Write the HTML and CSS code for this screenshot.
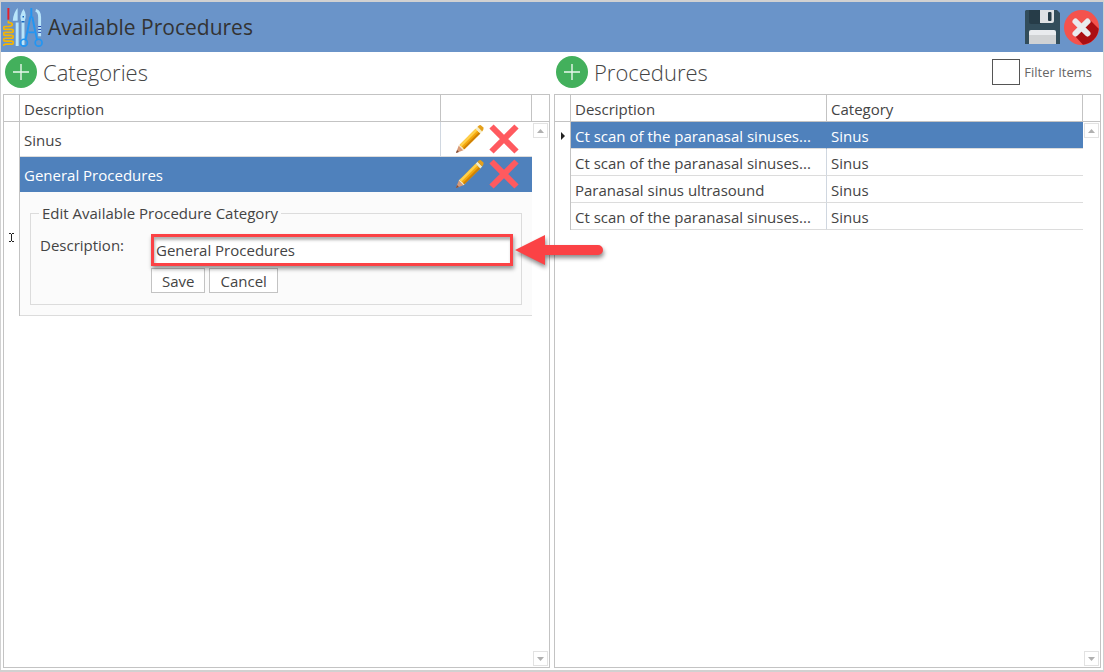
FILE: index.html
```html
<!DOCTYPE html>
<html lang="en">
<head>
    <meta charset="UTF-8">
    <title>Available Procedures</title>
    <link rel="stylesheet" href="styles.css">
</head>
<body>

<!-- Shared icons -->
<svg class="sprite" aria-hidden="true">
    <symbol id="icon-add" viewBox="0 0 32 32">
        <circle cx="16" cy="16" r="16" fill="#43b05c"/>
        <path d="M16 8v16M8 16h16" stroke="#e9f7ec" stroke-width="1.4"/>
    </symbol>
    <symbol id="icon-edit" viewBox="0 0 32 32">
        <path d="M1 31l3-8 5 5z" fill="#d99a76"/>
        <path d="M1 31l1.200-3.200 2 2z" fill="#7c4b3a"/>
        <path d="M4 23l2-2 5 5-2 2z" fill="#fbe9c0"/>
        <path d="M5 22L22 5l5 5-17 17z" fill="#f3a70c"/>
        <path d="M5 22L22 5l2 2L7 24z" fill="#ffd04a"/>
        <path d="M8.500 25.500l17-17 1.500 1.500-17 17z" fill="#cf8105"/>
        <path d="M22 5l2-2 5 5-2 2z" fill="#f5edc5"/>
        <path d="M24 3l1.500-1.500q1.500-1 3 .5l1.500 1.500q1 1.500 0 3L29 8z" fill="#e5a01a"/>
    </symbol>
    <symbol id="icon-delete" viewBox="0 0 30 30">
        <path d="M2.500 2.500l25 25M27.500 2.500l-25 25" stroke="#ff5a5f" stroke-width="6"/>
    </symbol>
</svg>

<div class="window">

    <header class="titlebar">
        <svg class="logo" viewBox="0 0 42 42" fill="none" aria-hidden="true">
            <path d="M5.500 1v12" stroke="#e3202b" stroke-width="2"/>
            <path d="M5.500 14v2q4 0 4 2t-4 2h-3q-2 0-2 1.500t2 1.500h6q2 0 2 1.500t-2 1.500h-6q-2 0-2 1.500t2 1.500h6q2 0 2 1.500t-2 1.500h-6q-2 0-2 1.500t2 1.500h6q2 0 2 1.500t-2 1.500h-5q-3 0-3 2" stroke="#f7b500" stroke-width="1.700"/>
            <path d="M15 1v13h-5q1-9 5-13zM13 16h3v24h-3z" fill="#b8e5fb"/>
            <path d="M21 2q4 6 1 13v24h-3V15q-3-6 2-13z" fill="#b8e5fb"/>
            <path d="M20 10h1.500M19 15h3" stroke="#1565c0" stroke-width="1.500"/>
            <path d="M29 1v10M28 10l-3 15-2 9M30 10l3 15 2 9M26 26h6" stroke="#2196f3" stroke-width="2"/>
            <circle cx="21.500" cy="36.500" r="3.500" stroke="#2196f3" stroke-width="1.700"/>
            <circle cx="36.500" cy="36.500" r="3.500" stroke="#2196f3" stroke-width="1.700"/>
            <path d="M33.500 3.500q4 1 4 7V30" stroke="#b8e5fb" stroke-width="3"/>
            <path d="M36 20h3M36 23h3M36 26h3" stroke="#1e3fae" stroke-width="1"/>
        </svg>
        <h1 class="window-title">Available Procedures</h1>
        <button class="icon-button" type="button" aria-label="Save">
            <svg viewBox="0 0 35 35" aria-hidden="true">
                <path d="M1 0h31l3 3v31H0V1z" fill="#324d5b"/>
                <path d="M4 0h12v14H6q-2 0-2-2z" fill="#263c48"/>
                <path d="M15 0h14v11q0 2-2 2H15z" fill="#dfe2e5"/>
                <rect x="23" y="2" width="3.500" height="9" rx="1" fill="#263c48"/>
                <path d="M4 34V22q0-2 2-2h23q2 0 2 2v12z" fill="#e9ebee"/>
                <path d="M4 25h27v9H4z" fill="#d0d2d4"/>
            </svg>
        </button>
        <button class="icon-button" type="button" aria-label="Close">
            <svg viewBox="0 0 35 35" aria-hidden="true">
                <circle cx="17.500" cy="17.500" r="17.500" fill="#f4524d"/>
                <path d="M25 9l9.700 9.700a17.500 17.500 0 0 1-15.700 16L10 25z" fill="#ab0e12"/>
                <path d="M11.500 11.500l12 12M23.500 11.500l-12 12" stroke="#e9ebee" stroke-width="6" stroke-linecap="round"/>
            </svg>
        </button>
    </header>

    <main class="panels">

        <section class="panel">
            <div class="panel-head">
                <button class="add-button" type="button" aria-label="Add category"><svg aria-hidden="true"><use href="#icon-add"/></svg></button>
                <h2 class="panel-title">Categories</h2>
            </div>
            <div class="grid">
                <div class="grid-body">
                    <table class="grid-table categories">
                        <colgroup><col class="col-mark"><col><col class="col-tools"></colgroup>
                        <thead>
                            <tr><th></th><th>Description</th><th></th></tr>
                        </thead>
                        <tbody>
                            <tr>
                                <td class="mark"></td>
                                <td>Sinus</td>
                                <td class="tools">
                                    <button class="tool" type="button" aria-label="Edit Sinus"><svg aria-hidden="true"><use href="#icon-edit"/></svg></button>
                                    <button class="tool" type="button" aria-label="Delete Sinus"><svg aria-hidden="true"><use href="#icon-delete"/></svg></button>
                                </td>
                            </tr>
                            <tr class="selected">
                                <td class="mark"></td>
                                <td>General Procedures</td>
                                <td class="tools">
                                    <button class="tool" type="button" aria-label="Edit General Procedures"><svg aria-hidden="true"><use href="#icon-edit"/></svg></button>
                                    <button class="tool" type="button" aria-label="Delete General Procedures"><svg aria-hidden="true"><use href="#icon-delete"/></svg></button>
                                </td>
                            </tr>
                            <tr class="edit-row">
                                <td class="mark">
                                    <svg class="caret" viewBox="0 0 7 9" aria-hidden="true"><path d="M1 .5h2M4 .5h2M3.500 1v7M1 8.500h2M4 8.500h2" stroke="#222" fill="none"/></svg>
                                </td>
                                <td class="edit-cell" colspan="2">
                                    <form>
                                        <fieldset>
                                            <legend>Edit Available Procedure Category</legend>
                                            <div class="field">
                                                <label for="description">Description:</label>
                                                <div class="field-box">
                                                    <input id="description" type="text" value="General Procedures">
                                                    <svg class="arrow" viewBox="0 0 88 32" aria-hidden="true"><path d="M0 16L30 1v10h53a5 5 0 0 1 0 10H30v10z" fill="#fb4245"/></svg>
                                                </div>
                                                <div class="actions">
                                                    <button type="button">Save</button>
                                                    <button type="button">Cancel</button>
                                                </div>
                                            </div>
                                        </fieldset>
                                    </form>
                                </td>
                            </tr>
                        </tbody>
                    </table>
                </div>
                <div class="scrollbar">
                    <div class="scroll-head"></div>
                    <button class="scroll-button" type="button" aria-label="Scroll up"><svg viewBox="0 0 7 4" aria-hidden="true"><path d="M0 4l3.500-4L7 4z"/></svg></button>
                    <button class="scroll-button down" type="button" aria-label="Scroll down"><svg viewBox="0 0 7 4" aria-hidden="true"><path d="M0 0h7L3.500 4z"/></svg></button>
                </div>
            </div>
        </section>

        <section class="panel">
            <div class="panel-head">
                <button class="add-button" type="button" aria-label="Add procedure"><svg aria-hidden="true"><use href="#icon-add"/></svg></button>
                <h2 class="panel-title">Procedures</h2>
                <label class="filter"><input type="checkbox">Filter Items</label>
            </div>
            <div class="grid">
                <div class="grid-body">
                    <table class="grid-table procedures">
                        <colgroup><col class="col-mark"><col><col></colgroup>
                        <thead>
                            <tr><th></th><th>Description</th><th>Category</th></tr>
                        </thead>
                        <tbody>
                            <tr class="selected">
                                <td class="mark"><svg class="pointer" viewBox="0 0 4 8" aria-hidden="true"><path d="M0 0l4 4-4 4z" fill="#222"/></svg></td>
                                <td>Ct scan of the paranasal sinuses...</td><td>Sinus</td>
                            </tr>
                            <tr><td class="mark"></td><td>Ct scan of the paranasal sinuses...</td><td>Sinus</td></tr>
                            <tr><td class="mark"></td><td>Paranasal sinus ultrasound</td><td>Sinus</td></tr>
                            <tr><td class="mark"></td><td>Ct scan of the paranasal sinuses...</td><td>Sinus</td></tr>
                        </tbody>
                    </table>
                </div>
                <div class="scrollbar">
                    <div class="scroll-head"></div>
                    <button class="scroll-button" type="button" aria-label="Scroll up"><svg viewBox="0 0 7 4" aria-hidden="true"><path d="M0 4l3.500-4L7 4z"/></svg></button>
                    <button class="scroll-button down" type="button" aria-label="Scroll down"><svg viewBox="0 0 7 4" aria-hidden="true"><path d="M0 0h7L3.500 4z"/></svg></button>
                </div>
            </div>
        </section>

    </main>
</div>

</body>
</html>
```
FILE: styles.css
```css
* {
    box-sizing: border-box;
}
body {
    margin: 0;
    font-family: "Open Sans", "Noto Sans", sans-serif;
    font-size: 15px;
    line-height: 20px;
    color: #444;
    background: #fff;
}
button, input {
    font: inherit;
    color: inherit;
}
button {
    padding: 0;
    border: none;
    background: none;
}
svg {
    display: block;
}
.sprite {
    position: absolute;
    width: 0;
    height: 0;
}

.window {
    display: flex;
    flex-direction: column;
    min-height: 100vh;
    border: 1px solid #d1d1d1;
    border-width: 2px 1px 2px 1px;
}

/* Title bar */
.titlebar {
    display: flex;
    align-items: center;
    gap: 4px;
    height: 50px;
    padding: 0 4px 0 2px;
    background: #6a94c9;
}
.logo {
    width: 41px;
    height: 41px;
}
.window-title {
    flex: 1;
    margin: 0;
    font-size: 21px;
    line-height: 30px;
    font-weight: 400;
    color: #333;
}
.icon-button svg {
    width: 35px;
    height: 35px;
}

/* Panels */
.panels {
    display: flex;
    flex: 1;
    gap: 4px;
    padding: 0 2px 2px;
}
.panel {
    display: flex;
    flex: 1;
    flex-direction: column;
    min-width: 0;
}
.panel-head {
    display: flex;
    align-items: center;
    gap: 6px;
    height: 42px;
    padding: 0 9px 2px 2px;
}
.add-button svg {
    width: 32px;
    height: 32px;
}
.panel-title {
    flex: 1;
    margin: 0;
    font-size: 22px;
    line-height: 30px;
    font-weight: 300;
    color: #444;
}
.filter {
    display: flex;
    align-items: center;
    gap: 4px;
    font-size: 13px;
    color: #666;
}
.filter input {
    appearance: none;
    width: 28px;
    height: 26px;
    margin: 0;
    border: 1px solid #555;
    background: #fff;
}

/* Grids */
.grid {
    display: flex;
    flex: 1;
    border: 1px solid #c3c3c3;
}
.grid-body {
    flex: 1;
    min-width: 0;
}
.grid-table {
    width: 100%;
    table-layout: fixed;
    border-collapse: separate;
    border-spacing: 0;
}
.col-mark {
    width: 16px;
}
.col-tools {
    width: 91px;
}
.grid-table th,
.grid-table td {
    height: 27px;
    padding: 4px 4px 2px;
    border-right: 1px solid #d0d7e0;
    border-bottom: 1px solid #dcdcdc;
    text-align: left;
    white-space: nowrap;
}
.grid-table th {
    border-color: #c3c3c3;
    font-weight: 400;
}
.grid-table td:last-child {
    border-right: none;
}
.grid-table td.mark {
    padding: 0;
    border-right-color: #c3c3c3;
    border-bottom: none;
}
.categories td {
    height: 35px;
}
.grid-table .selected td:not(.mark) {
    border-right-color: #4f81bc;
    background: #4f81bc;
    color: #fff;
}
.categories .selected td {
    border-bottom-color: #4f81bc;
}
.grid-table .tools {
    padding: 0 12px 0 0;
    font-size: 0;
    text-align: right;
}
.tool {
    margin-left: 2px;
    vertical-align: middle;
}
.tool svg {
    width: 32px;
    height: 30px;
}
.pointer {
    width: 4px;
    height: 8px;
    margin-left: 6px;
}

/* Inline edit form */
.edit-row .mark {
    position: relative;
}
.caret {
    position: absolute;
    top: 41px;
    left: 4px;
    width: 7px;
    height: 9px;
}
.grid-table .edit-cell {
    padding: 11px 10px 10px;
    background: #fbfbfb;
}
fieldset {
    min-width: 0;
    margin: 0;
    padding: 11px 8px 11px;
    border: 1px solid #dcdcdc;
}
legend {
    padding: 0 3px;
}
.field {
    display: grid;
    grid-template-columns: 112px 1fr;
    row-gap: 2px;
}
.field label {
    padding: 1px;
}
.field-box {
    position: relative;
}
.field-box input {
    display: block;
    width: 100%;
    height: 32px;
    padding: 0 2px;
    border: 3px solid #fb4245;
    outline: none;
    background: #fff;
    box-shadow: 1px 3px 4px rgba(0, 0, 0, .4), inset 1px 3px 3px rgba(0, 0, 0, .3);
}
.arrow {
    position: absolute;
    top: 0;
    left: 100%;
    z-index: 1;
    width: 88px;
    height: 32px;
    margin-left: 2px;
    overflow: visible;
    filter: drop-shadow(1px 3px 2px rgba(0, 0, 0, .45));
}
.actions {
    display: flex;
    grid-column: 2;
    gap: 4px;
}
.actions button {
    height: 25px;
    padding: 0 10px;
    border: 1px solid #c3c3c3;
    background: #fff;
}

/* Scrollbars */
.scrollbar {
    display: flex;
    flex-direction: column;
    align-items: center;
    width: 17px;
}
.scroll-head {
    width: 100%;
    height: 27px;
    margin-bottom: 1px;
    border-bottom: 1px solid #c3c3c3;
}
.scroll-button {
    display: flex;
    align-items: center;
    justify-content: center;
    width: 15px;
    height: 15px;
    border: 1px solid #e2e2e2;
}
.scroll-button.down {
    margin-top: auto;
    margin-bottom: 1px;
}
.scroll-button svg {
    width: 7px;
    height: 4px;
    fill: #b0b0b0;
}
```
